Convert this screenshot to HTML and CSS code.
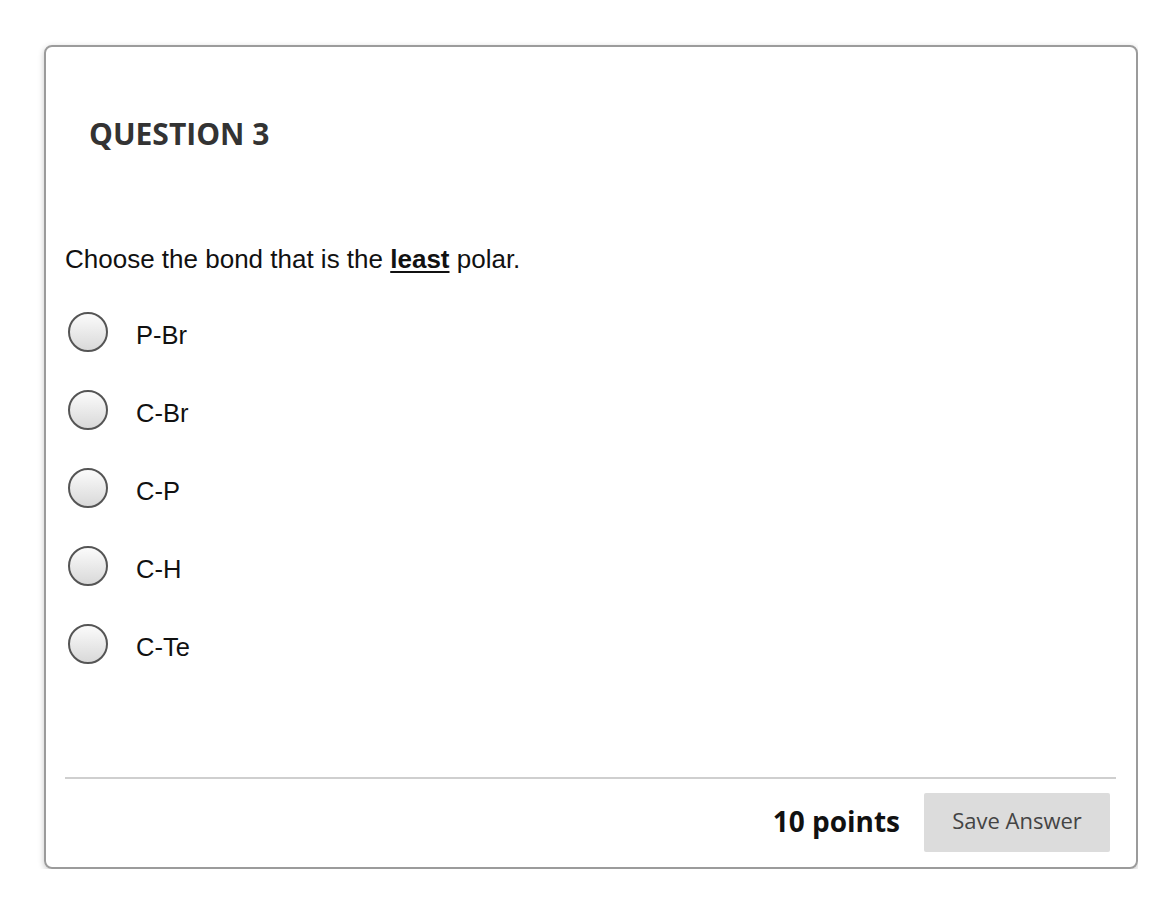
FILE: index.html
```html
<!DOCTYPE html>
<html>
<head>
<meta charset="utf-8">
<link rel="stylesheet" href="styles.css">
</head>
<body>
<div class="card">
  <h2 class="title">QUESTION 3</h2>
  <p class="prompt">Choose the bond that is the <u><b>least</b></u> polar.</p>
  <ul class="options">
    <li class="option"><span class="radio"></span><span class="label">P-Br</span></li>
    <li class="option"><span class="radio"></span><span class="label">C-Br</span></li>
    <li class="option"><span class="radio"></span><span class="label">C-P</span></li>
    <li class="option"><span class="radio"></span><span class="label">C-H</span></li>
    <li class="option"><span class="radio"></span><span class="label">C-Te</span></li>
  </ul>
  <div class="footer">
    <span class="points">10 points</span>
    <button class="save">Save Answer</button>
  </div>
</div>
</body>
</html>
```
FILE: styles.css
```css
html, body {
  margin: 0;
  padding: 0;
  background: #fff;
}
body {
  padding: 45px 0 0 44px;
  width: 1094px;
}
.card {
  box-sizing: border-box;
  width: 1094px;
  height: 824px;
  border: 2px solid #9b9b9b;
  border-radius: 8px;
  box-shadow: 0 2px 6px rgba(0,0,0,0.22);
  padding: 67px 20px 15px 19px;
  display: flex;
  flex-direction: column;
}
.title {
  margin: 0 0 0 24px;
  font-family: "Open Sans", sans-serif;
  font-weight: 700;
  font-size: 30px;
  line-height: 40px;
  color: #333;
}
.prompt {
  margin: 91px 0 0 0;
  font-family: "Liberation Sans", Arial, sans-serif;
  font-size: 26px;
  line-height: 28px;
  color: #111;
}
.prompt u {
  text-underline-offset: 3px;
  text-decoration-thickness: 2px;
}
.options {
  list-style: none;
  margin: 39px 0 0 0;
  padding: 0;
  display: flex;
  flex-direction: column;
  gap: 38px;
}
.option {
  display: flex;
  align-items: center;
  gap: 28px;
  height: 40px;
}
.radio {
  box-sizing: border-box;
  width: 40px;
  height: 40px;
  margin-left: 3px;
  border-radius: 50%;
  border: 2px solid #555;
  background: linear-gradient(to bottom, #fbfbfb, #d9d9d9);
}
.label {
  font-family: "Liberation Sans", Arial, sans-serif;
  font-size: 25.5px;
  line-height: 28px;
  color: #111;
  padding-top: 6px;
}
.footer {
  margin-top: auto;
  border-top: 2px solid #cfcfcf;
  padding: 14px 6px 0 0;
  display: flex;
  justify-content: flex-end;
  align-items: center;
  gap: 24px;
}
.points {
  font-family: "Open Sans", sans-serif;
  font-weight: 700;
  font-size: 28px;
  color: #111;
  padding-bottom: 4px;
}
.save {
  width: 186px;
  height: 59px;
  border: none;
  border-radius: 2px;
  background: #dcdcdc;
  font-family: "Open Sans", sans-serif;
  font-size: 22px;
  color: #444;
  padding: 0 0 5px 0;
}
```
